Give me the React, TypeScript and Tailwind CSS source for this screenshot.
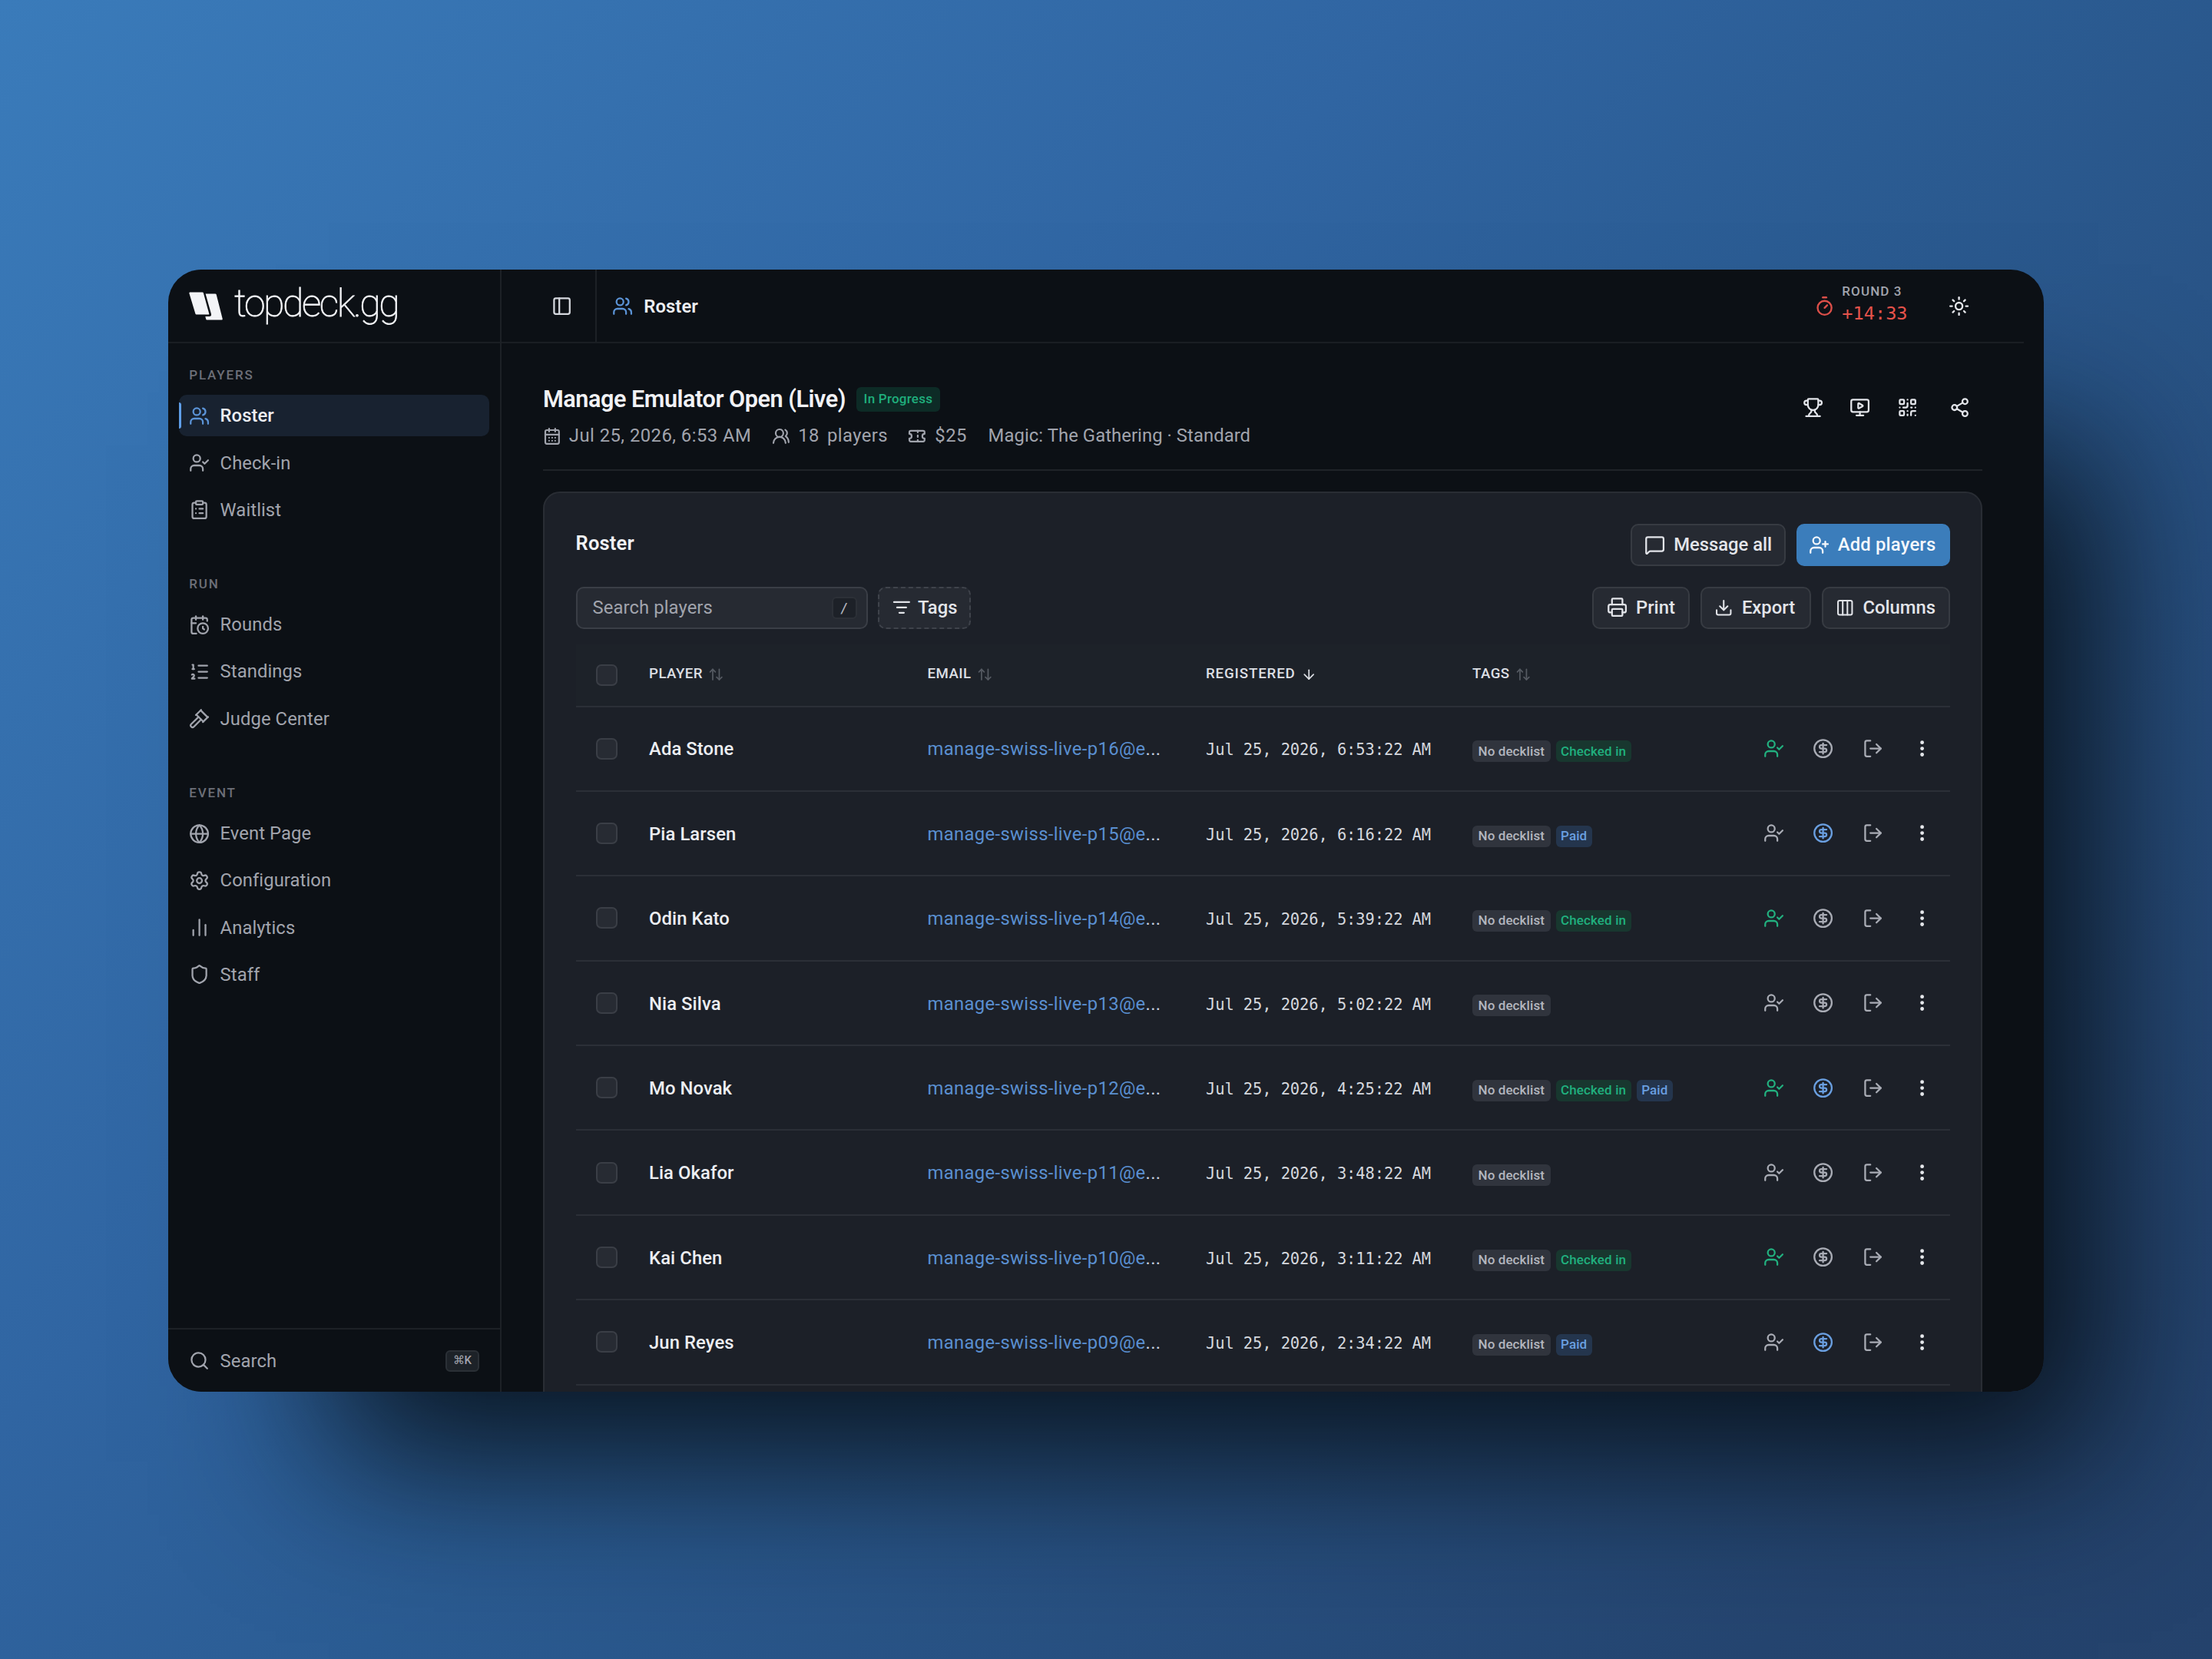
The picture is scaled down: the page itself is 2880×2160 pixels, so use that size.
import React from "react";
import {
  ArrowDown,
  ArrowUpDown,
  CalendarClock,
  CalendarDays,
  ChartNoAxesColumn,
  CircleDollarSign,
  ClipboardList,
  Columns3,
  Download,
  EllipsisVertical,
  Gavel,
  Globe,
  ListFilter,
  ListOrdered,
  LogOut,
  MessageSquare,
  MonitorPlay,
  PanelLeft,
  Printer,
  QrCode,
  Search,
  Settings,
  Share2,
  Shield,
  Sun,
  Ticket,
  Timer,
  Trophy,
  UserCheck,
  UserPlus,
  Users,
  UsersRound,
  type LucideIcon,
} from "lucide-react";

type NavItem = { label: string; icon: LucideIcon; active?: boolean };

const groups: { title: string; items: NavItem[] }[] = [
  {
    title: "PLAYERS",
    items: [
      { label: "Roster", icon: Users, active: true },
      { label: "Check-in", icon: UserCheck },
      { label: "Waitlist", icon: ClipboardList },
    ],
  },
  {
    title: "RUN",
    items: [
      { label: "Rounds", icon: CalendarClock },
      { label: "Standings", icon: ListOrdered },
      { label: "Judge Center", icon: Gavel },
    ],
  },
  {
    title: "EVENT",
    items: [
      { label: "Event Page", icon: Globe },
      { label: "Configuration", icon: Settings },
      { label: "Analytics", icon: ChartNoAxesColumn },
      { label: "Staff", icon: Shield },
    ],
  },
];

const players = [
  { name: "Ada Stone", id: "16", time: "6:53:22", checkedIn: true, paid: false },
  { name: "Pia Larsen", id: "15", time: "6:16:22", checkedIn: false, paid: true },
  { name: "Odin Kato", id: "14", time: "5:39:22", checkedIn: true, paid: false },
  { name: "Nia Silva", id: "13", time: "5:02:22", checkedIn: false, paid: false },
  { name: "Mo Novak", id: "12", time: "4:25:22", checkedIn: true, paid: true },
  { name: "Lia Okafor", id: "11", time: "3:48:22", checkedIn: false, paid: false },
  { name: "Kai Chen", id: "10", time: "3:11:22", checkedIn: true, paid: false },
  { name: "Jun Reyes", id: "09", time: "2:34:22", checkedIn: false, paid: true },
];

const COLS = "grid grid-cols-[95.5px_362.5px_362.5px_347px_1fr_252px] items-center";

function Logo() {
  return (
    <div className="flex h-full items-center pl-[27px]">
      <svg viewBox="0 0 44 37" className="h-[37px] w-[44px]" fill="#f3f4f7">
        <path d="M1.5 0.5H17.5Q18.6 0.5 18.9 1.6L26.2 28.2Q26.6 29.6 25.2 29.6H9.8Q8.7 29.6 8.4 28.5L0.4 1.9Q0.1 0.5 1.5 0.5Z" />
        <path d="M21.6 2.4H34.2Q35.4 2.4 35.7 3.5L43.7 35Q44 36.5 42.6 36.5H23.4Q22.4 36.5 22.2 35.6L21.3 32.1H26.2Q29.8 32.1 28.9 28.6Z" />
      </svg>
      <span className="ml-[15px] mt-[-7px] text-[50px] font-thin leading-none tracking-[-2.4px] text-[#f3f4f7] [-webkit-text-stroke:0.8px_#f3f4f7]">
        topdeck.gg
      </span>
    </div>
  );
}

function Sidebar() {
  return (
    <aside className="flex w-[434px] shrink-0 flex-col border-r-2 border-[#1d2126]">
      <div className="h-[96px] shrink-0 border-b-2 border-[#1a1e23]">
        <Logo />
      </div>
      <nav className="flex flex-1 flex-col gap-[55.2px] px-[13.6px] pt-[27px]">
        {groups.map((g) => (
          <div key={g.title}>
            <div className="flex h-[27px] items-center pl-[13.6px] pt-[2px] text-[17px] font-medium tracking-[1.85px] text-[#6c6f78]">
              {g.title}
            </div>
            <div className="mt-[13px] flex flex-col gap-[6.8px]">
              {g.items.map((it) => (
                <div
                  key={it.label}
                  className={
                    it.active
                      ? "relative flex h-[54.4px] items-center rounded-[10px] bg-[#182230] pl-[13.2px] text-[23.8px] font-medium text-[#eceef2]"
                      : "relative flex h-[54.4px] items-center rounded-[10px] pl-[13.2px] text-[23.8px] text-[#a1a4ad]"
                  }
                >
                  {it.active && (
                    <span className="absolute left-0 top-[10px] h-[34px] w-[3.4px] rounded-r-full bg-[#5f9ee8]" />
                  )}
                  <it.icon
                    className={it.active ? "size-[27.2px] text-[#5b93d6]" : "size-[27.2px]"}
                    strokeWidth={2}
                  />
                  <span className="ml-[13.6px] pt-[2px] tracking-[0.08px]">{it.label}</span>
                </div>
              ))}
            </div>
          </div>
        ))}
      </nav>
      <div className="flex h-[83px] items-center border-t-2 border-[#1d2126] pl-[26.8px] pr-[27.5px] text-[#a1a4ad]">
        <Search className="size-[27.2px]" strokeWidth={2} />
        <span className="ml-[13.6px] flex-1 pt-[2px] text-[23.8px] tracking-[0.1px]">Search</span>
        <span className="flex h-[28px] w-[43.5px] items-center justify-center rounded-[6px] border-2 border-[#2b3036] bg-[#1d2228] text-[15px] font-medium">
          ⌘K
        </span>
      </div>
    </aside>
  );
}

function TopBar() {
  return (
    <header className="mr-[26px] flex h-[96px] shrink-0 items-center border-b-2 border-[#1a1e23] pr-[70.5px]">
      <div className="flex h-full w-[124px] items-center justify-end border-r-2 border-[#1d2126] pr-[30px] pt-[2px] text-[#d5d8de]">
        <PanelLeft className="size-[27.2px]" strokeWidth={2} />
      </div>
      <Users className="ml-[20px] mt-[2px] size-[27.2px] text-[#5b93d6]" strokeWidth={2} />
      <span className="ml-[14px] pt-[3px] text-[23.8px] font-semibold tracking-[0.1px] text-[#eceef2]">Roster</span>
      <div className="ml-auto flex items-center pt-[2px]">
        <Timer className="size-[27.2px] text-[#dc4f49]" strokeWidth={2.1} />
        <div className="ml-[9.5px] mt-[-7px] w-[88px]">
          <div className="text-[17px] font-medium leading-[20px] tracking-[1.1px] text-[#a1a4ad]">
            ROUND 3
          </div>
          <div className="mt-[5px] font-['DejaVu_Sans_Mono',monospace] text-[23.6px] leading-[28px] text-[#e5534b]">
            +14:33
          </div>
        </div>
        <Sun className="ml-[51px] size-[27.2px] text-[#e3e5ea]" strokeWidth={2.1} />
      </div>
    </header>
  );
}

function EventHeader() {
  return (
    <div className="flex h-[166px] shrink-0 justify-between border-b-2 border-[#1f2328] pr-[16px]">
      <div className="pt-[54px]">
        <div className="flex h-[37px] items-center">
          <h1 className="pt-px text-[30.6px] font-semibold leading-none tracking-[-0.45px] text-[#f1f2f5]">
            Manage Emulator Open (Live)
          </h1>
          <span className="ml-[13.5px] flex h-[32px] items-center rounded-[6px] bg-[#0d2b26] px-[10px] text-[17px] font-medium tracking-[0.25px] text-[#1fae7c]">
            In Progress
          </span>
        </div>
        <div className="mt-[14px] flex h-[32px] items-center text-[23.8px] text-[#a1a4ad]">
          <CalendarDays className="size-[23.8px]" strokeWidth={2.2} />
          <span className="ml-[10px] tracking-[0.48px]">Jul 25, 2026, 6:53 AM</span>
          <UsersRound className="ml-[27px] size-[23.8px]" strokeWidth={2.2} />
          <span className="ml-[10px] tracking-[0.6px]">18</span>
          <span className="ml-[10px] tracking-[0.4px]">players</span>
          <Ticket className="ml-[26px] size-[23.8px]" strokeWidth={2.2} />
          <span className="ml-[11.5px] tracking-[0.6px]">$25</span>
          <span className="ml-[27.5px] tracking-[0.08px]">Magic: The Gathering · Standard</span>
        </div>
      </div>
      <div className="mt-[57px] flex h-[54px] items-center self-start text-[#e3e5ea]">
        <Trophy className="size-[27.2px]" strokeWidth={2} />
        <MonitorPlay className="ml-[34px] size-[27.2px]" strokeWidth={2} />
        <QrCode className="ml-[34px] size-[27.2px]" strokeWidth={2} />
        <Share2 className="ml-[41px] size-[27.2px]" strokeWidth={2} />
      </div>
    </div>
  );
}

function OutlineButton({
  icon: Icon,
  children,
  width,
  iconSize = "size-[27.2px]",
}: {
  icon: LucideIcon;
  children: string;
  width: string;
  iconSize?: string;
}) {
  return (
    <button
      className={`${width} flex h-[55px] items-center rounded-[10px] border-2 border-[#373b42] bg-[#262a32] pl-[16.5px] text-[23.8px] font-medium text-[#e3e5ea]`}
    >
      <Icon className={iconSize} strokeWidth={2} />
      <span className="ml-[11px] pt-px">{children}</span>
    </button>
  );
}

function HeadCell({ children, sorted }: { children: string; sorted?: boolean }) {
  return (
    <div className="flex items-center pb-[2px] text-[18.7px] font-medium text-[#dcdfe4]">
      <span className={sorted ? "tracking-[0.85px]" : "tracking-[0.45px]"}>{children}</span>
      {sorted ? (
        <ArrowDown className="ml-[7.5px] mt-[2px] size-[20.4px]" strokeWidth={2} />
      ) : (
        <ArrowUpDown className="ml-[7.5px] mt-[2px] size-[20.4px] text-[#565b63]" strokeWidth={2} />
      )}
    </div>
  );
}

function Checkbox() {
  return <span className="ml-[26.5px] block size-[28px] rounded-[7px] border-2 border-[#3a3e46] bg-[#272b33]" />;
}

function Row({ p }: { p: (typeof players)[number] }) {
  return (
    <div className={`${COLS} h-[110.4px] shrink-0 border-b-2 border-[#2b2f37]`}>
      <Checkbox />
      <span className="pt-[3px] text-[23.8px] font-medium tracking-[0.1px] text-[#eceef2]">{p.name}</span>
      <span className="pt-[3px] text-[23.8px] tracking-[0.36px] text-[#5a8fd0]">
        manage-swiss-live-p{p.id}@e<span className="text-[#c9d3e0]">...</span>
      </span>
      <span className="whitespace-pre pt-[4px] font-['DejaVu_Sans_Mono',monospace] text-[20.4px] tracking-[-0.07px] text-[#d5d8de]">
        Jul 25, 2026, {p.time} AM
      </span>
      <span className="flex items-center gap-[7px] pt-[7px] text-[17px] font-medium leading-none tracking-[0.1px]">
        <span className="flex h-[28px] items-center rounded-[6px] bg-[#30343d] px-[7.5px] text-[#b3b6be]">No decklist</span>
        {p.checkedIn && (
          <span className="flex h-[28px] items-center rounded-[6px] bg-[#18372f] px-[6.5px] tracking-[0.12px] text-[#20b07e]">
            Checked in
          </span>
        )}
        {p.paid && (
          <span className="flex h-[28px] items-center rounded-[6px] bg-[#24354d] px-[6.5px] text-[#6a9fe0]">Paid</span>
        )}
      </span>
      <span className="flex items-center gap-[37.4px] pl-[9px] text-[#a9acb5]">
        <UserCheck
          className={p.checkedIn ? "size-[27.2px] shrink-0 text-[#22b07f]" : "size-[27.2px] shrink-0"}
          strokeWidth={2}
        />
        <CircleDollarSign
          className={p.paid ? "size-[27.2px] shrink-0 text-[#6a9fe0]" : "size-[27.2px] shrink-0"}
          strokeWidth={2}
        />
        <LogOut className="size-[27.2px] shrink-0" strokeWidth={2} />
        <EllipsisVertical className="size-[27.2px] shrink-0 text-[#e8eaee]" strokeWidth={2.3} />
      </span>
    </div>
  );
}

function RosterCard() {
  return (
    <section className="mt-[27px] flex h-[1240px] shrink-0 flex-col rounded-[22px] border-2 border-[#292d34] bg-[#1c2028] px-[40.5px] pt-[40px]">
      <div className="flex h-[55px] items-center gap-[14px]">
        <h2 className="mr-auto pb-[3px] text-[25.5px] font-semibold leading-none tracking-[0.2px] text-[#f1f2f5]">Roster</h2>
        <OutlineButton icon={MessageSquare} width="w-[202px]">Message all</OutlineButton>
        <button className="flex h-[55px] w-[200px] items-center rounded-[10px] bg-[#3b7dbb] pl-[16.5px] text-[23.8px] font-medium text-[#f5f8fc]">
          <UserPlus className="size-[27.2px]" strokeWidth={2} />
          <span className="ml-[10.5px] pt-px tracking-[0.2px]">Add players</span>
        </button>
      </div>
      <div className="mt-[26.5px] flex h-[55px] items-center gap-[13.6px]">
        <div className="flex h-[55px] w-[380px] items-center justify-between rounded-[10px] border-2 border-[#3a3e46] bg-[#262a32] pl-[20px] pr-[12px]">
          <span className="pt-px text-[23.8px] tracking-[0.1px] text-[#a1a4ad]">Search players</span>
          <span className="flex h-[29px] w-[33px] items-center justify-center rounded-[6px] border-2 border-[#2c3037] bg-[#1d2128] font-['DejaVu_Sans_Mono',monospace] text-[18px] text-[#b3b6be]">
            /
          </span>
        </div>
        <button className="flex h-[55px] w-[121px] items-center rounded-[10px] border-2 border-dashed border-[#3f434b] bg-[#262a32] pl-[16.5px] text-[23.8px] font-medium text-[#e3e5ea]">
          <ListFilter className="size-[23.8px]" strokeWidth={2.3} />
          <span className="ml-[9.5px] pt-px">Tags</span>
        </button>
        <div className="ml-auto flex gap-[13.6px]">
          <OutlineButton icon={Printer} width="w-[127px]">Print</OutlineButton>
          <OutlineButton icon={Download} width="w-[144px]" iconSize="size-[24.5px]">Export</OutlineButton>
          <OutlineButton icon={Columns3} width="w-[167px]" iconSize="size-[24.5px]">Columns</OutlineButton>
        </div>
      </div>
      <div className={`${COLS} mt-[20px] h-[82px] shrink-0 border-b-2 border-[#2b2f37] bg-[#1d2229]`}>
        <Checkbox />
        <HeadCell>PLAYER</HeadCell>
        <HeadCell>EMAIL</HeadCell>
        <HeadCell sorted>REGISTERED</HeadCell>
        <HeadCell>TAGS</HeadCell>
      </div>
      {players.map((p) => (
        <Row key={p.id} p={p} />
      ))}
    </section>
  );
}

export default function App() {
  return (
    <div className="h-[2160px] w-[2880px] overflow-hidden bg-[linear-gradient(135deg,#3a7bba_0%,#3065a2_37%,#2b5c93_52%,#254570_88%,#24426c_100%)] pl-[219px] pt-[351px] font-[Roboto,sans-serif]">
      <div className="h-[1461px] w-[2442px] rounded-[43px] shadow-[140px_160px_195px_-70px_rgba(6,12,18,0.9)]">
        <div className="flex h-full w-full overflow-hidden rounded-[43px] bg-[#0c1015]">
          <Sidebar />
          <div className="flex min-w-0 flex-1 flex-col">
            <TopBar />
            <main className="mr-[80px] ml-[54px] flex min-h-0 flex-1 flex-col overflow-hidden">
              <EventHeader />
              <RosterCard />
            </main>
          </div>
        </div>
      </div>
    </div>
  );
}
